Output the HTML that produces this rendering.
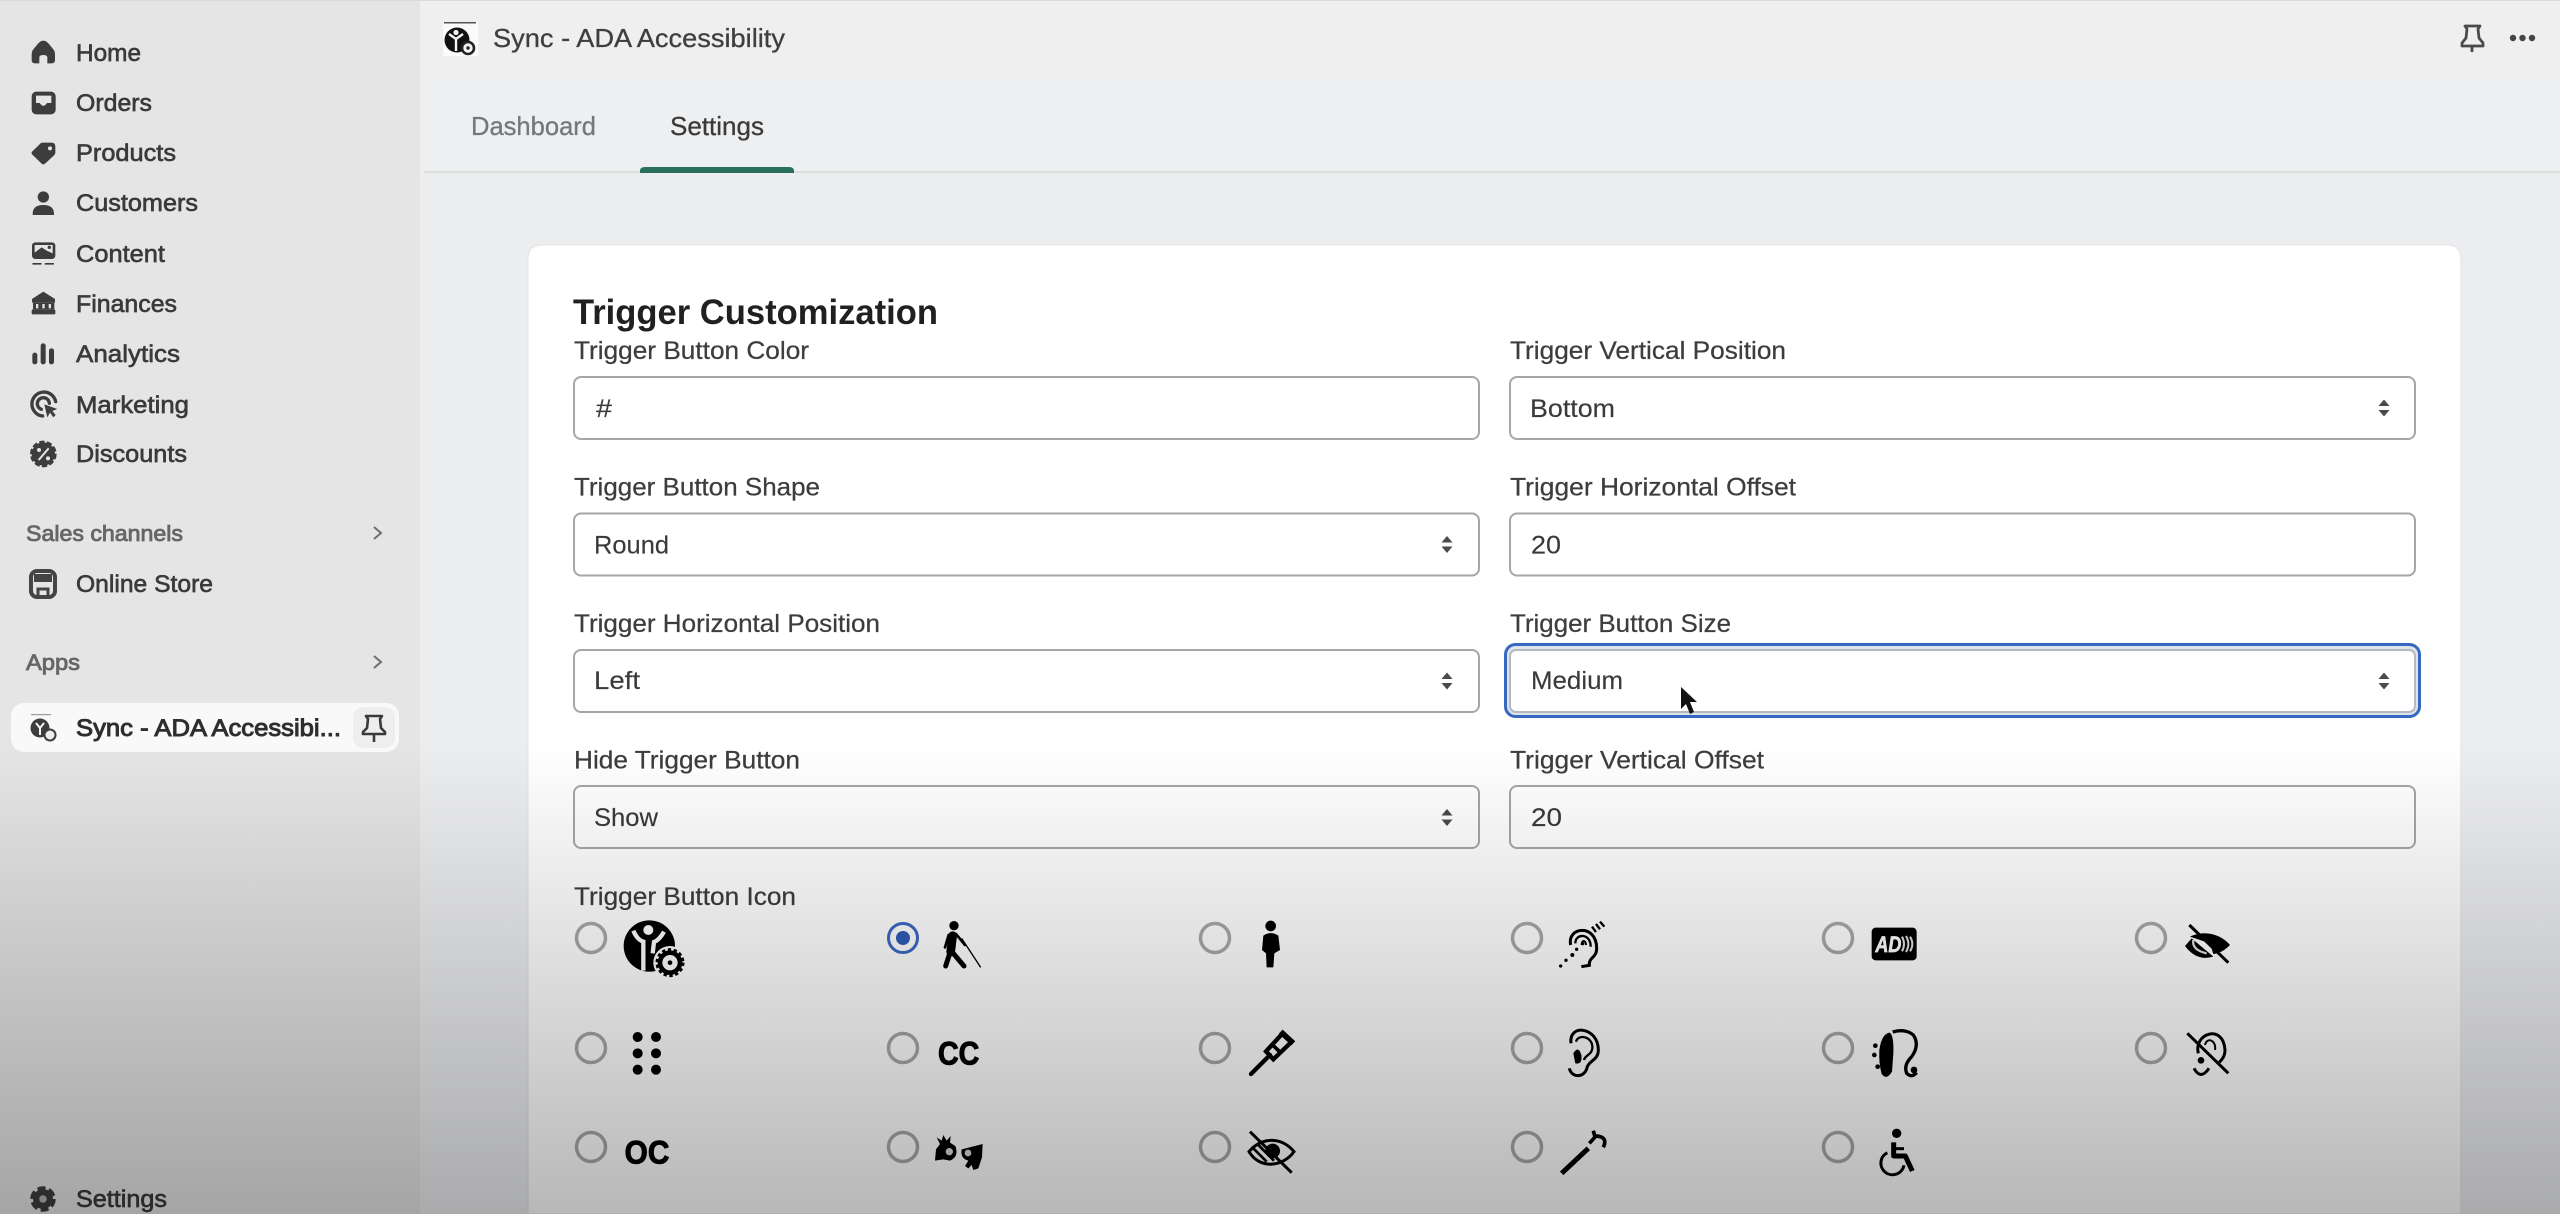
<!DOCTYPE html>
<html lang="en">
<head>
<meta charset="utf-8">
<title>Sync - ADA Accessibility</title>
<style>
html,body{margin:0;padding:0;background:#ebecee;width:2560px;height:1214px;overflow:hidden}
svg{display:block}
text{font-family:"Liberation Sans",sans-serif}
.n{font-size:24.500px;fill:#3a3a3a;stroke:#3a3a3a;stroke-width:.65}
.g{font-size:22.500px;fill:#666;stroke:#666;stroke-width:.85}
.l{font-size:25px;fill:#3d3d3d;stroke:#3d3d3d;stroke-width:.25}
.v{font-size:25px;fill:#3a3a3a;stroke:#3a3a3a;stroke-width:.15}
.i{fill:#fff;stroke:#a6a6a6;stroke-width:2}
.r{fill:none;stroke:#a8a8a8;stroke-width:3.500}
.ar{fill:#4a4a4a}
</style>
</head>
<body>
<svg width="2560" height="1214" viewBox="0 0 2560 1214" xmlns="http://www.w3.org/2000/svg">
<defs>
<linearGradient id="ov" gradientUnits="userSpaceOnUse" x1="0" y1="745" x2="0" y2="1214">
<stop offset="0" stop-color="#000" stop-opacity="0"/>
<stop offset="1" stop-color="#000" stop-opacity=".28"/>
</linearGradient>
</defs>

<!-- backgrounds -->
<rect width="2560" height="1214" fill="#ecedef"/>
<rect x="420" y="0" width="2140" height="80" fill="#efefef"/>
<rect x="420" y="80" width="2140" height="92" fill="#eeeff1"/>
<rect x="424" y="171" width="2136" height="2" fill="#dcdddd"/>
<rect x="0" y="0" width="420" height="1214" fill="#e5e5e5"/>
<rect x="0" y="0" width="2560" height="1" fill="#dadada"/>

<!-- sidebar text -->
<text class="n" x="76" y="61" textLength="65" lengthAdjust="spacingAndGlyphs">Home</text>
<text class="n" x="76" y="111" textLength="76" lengthAdjust="spacingAndGlyphs">Orders</text>
<text class="n" x="76" y="161" textLength="100" lengthAdjust="spacingAndGlyphs">Products</text>
<text class="n" x="76" y="211" textLength="122" lengthAdjust="spacingAndGlyphs">Customers</text>
<text class="n" x="76" y="262" textLength="89" lengthAdjust="spacingAndGlyphs">Content</text>
<text class="n" x="76" y="312" textLength="101" lengthAdjust="spacingAndGlyphs">Finances</text>
<text class="n" x="76" y="362" textLength="104" lengthAdjust="spacingAndGlyphs">Analytics</text>
<text class="n" x="76" y="413" textLength="113" lengthAdjust="spacingAndGlyphs">Marketing</text>
<text class="n" x="76" y="462" textLength="111" lengthAdjust="spacingAndGlyphs">Discounts</text>
<text class="g" x="26" y="541" textLength="157" lengthAdjust="spacingAndGlyphs">Sales channels</text>
<text class="n" x="76" y="592" textLength="137" lengthAdjust="spacingAndGlyphs">Online Store</text>
<text class="g" x="26" y="670" textLength="54" lengthAdjust="spacingAndGlyphs">Apps</text>

<!-- chevrons -->
<path d="M374 527l7 6-7 6M374 656l7 6-7 6" fill="none" stroke="#6e6e6e" stroke-width="2"/>

<!-- active app row -->
<rect x="11" y="703" width="388" height="49" rx="13" fill="#f9f9f9"/>
<rect x="353" y="707" width="42" height="41" rx="10" fill="#eeeeee"/>
<text class="n" x="76" y="736" textLength="265" lengthAdjust="spacingAndGlyphs" style="stroke-width:1;fill:#2e2e2e;stroke:#2e2e2e">Sync - ADA Accessibi...</text>
<path d="M366 716h16l-2 3 1 9 4 4v2h-22v-2l4-4 1-9zM374 734v8" fill="none" stroke="#3a3a3a" stroke-width="2.600" stroke-linejoin="round"/>

<!-- small app icon -->
<rect x="31" y="714" width="20" height="1.200" fill="#999"/>
<circle cx="40" cy="728" r="9.500" fill="#3d3d3d"/>
<path d="M36 723l4 5 4-5M40 728v7" stroke="#f5f5f5" stroke-width="2" fill="none"/>
<circle cx="50" cy="735" r="5.500" fill="#eee" stroke="#3d3d3d" stroke-width="2"/>

<!-- sidebar icons, drawn in 3x coords -->
<g transform="scale(.33333)" fill="#3d3d3d">
<path d="M130 122 Q138 122 146 131 L160 148 Q165 154 165 163 V180 Q165 190 155 190 H142 V172 Q142 165 130 165 Q118 165 118 172 V190 H105 Q95 190 95 180 V163 Q95 154 100 148 L114 131 Q122 122 130 122Z"/>
<rect x="95" y="275" width="72" height="68" rx="14"/>
<path d="M108 287 H154 V309 H141 Q130 326 119 309 H108Z" fill="#e5e5e5"/>
<path d="M128 428 H155 Q166 428 166 440 V458 Q166 463 160 468 L136 490 Q130 496 124 490 L97 464 Q92 459 97 454 L118 434 Q122 428 128 428Z"/>
<circle cx="150" cy="445" r="6" fill="#e5e5e5"/>
<circle cx="130" cy="591" r="17"/>
<path d="M98 645 Q96 615 130 615 Q164 615 162 645Z"/>
<rect x="96" y="727" width="70" height="50" rx="10"/>
<path d="M104 735 H158 V760 L140 752 L125 742 L104 758Z" fill="#e5e5e5"/>
<circle cx="148" cy="742" r="5"/>
<rect x="97" y="789" width="28" height="5" rx="2"/>
<rect x="134" y="789" width="28" height="5" rx="2"/>
<path d="M130 875 L165 897 V908 H96 V897Z"/>
<rect x="95" y="928" width="71" height="15" rx="4"/>
<rect x="99" y="908" width="64" height="20"/>
<rect x="108" y="912" width="7" height="13" fill="#e5e5e5"/><rect x="127" y="912" width="7" height="13" fill="#e5e5e5"/><rect x="146" y="912" width="7" height="13" fill="#e5e5e5"/>
<rect x="97" y="1058" width="15" height="35" rx="7"/>
<rect x="122" y="1030" width="15" height="63" rx="7"/>
<rect x="147" y="1045" width="15" height="48" rx="7"/>
<path d="M167 1205 A36 36 0 1 0 128 1248" fill="none" stroke="#3d3d3d" stroke-width="10" stroke-linecap="round"/>
<path d="M148 1210 A18 18 0 1 0 124 1228" fill="none" stroke="#3d3d3d" stroke-width="10" stroke-linecap="round"/>
<path d="M133 1213 L172 1227 L157 1233 L167 1245 L160 1252 L150 1238 L142 1252Z"/>
<circle cx="130" cy="1362" r="35"/>
<circle cx="130" cy="1362" r="37" fill="none" stroke="#3d3d3d" stroke-width="6" stroke-dasharray="16 7"/>
<path d="M116 1380 L146 1345" stroke="#e5e5e5" stroke-width="6"/>
<circle cx="117" cy="1350" r="6" fill="#e5e5e5"/>
<circle cx="144" cy="1375" r="6" fill="#e5e5e5"/>
</g>

<!-- online store icon -->
<rect x="31" y="571" width="24" height="26" rx="6" fill="none" stroke="#444" stroke-width="4"/>
<path d="M34 574h18v8h-18z" fill="#444"/>
<path d="M38 597v-8h10v8" fill="none" stroke="#444" stroke-width="3"/>
<!-- settings gear -->
<circle cx="43" cy="1199" r="10" fill="#3d3d3d"/>
<circle cx="43" cy="1199" r="11" fill="none" stroke="#3d3d3d" stroke-width="3.500" stroke-dasharray="8 3.500"/>
<circle cx="43" cy="1199" r="3.800" fill="#b3b3b3"/>
<text class="n" x="76" y="1207" textLength="91" lengthAdjust="spacingAndGlyphs">Settings</text>

<!-- top bar -->
<rect x="443" y="22" width="35" height="34" fill="#fbfbfb"/>
<rect x="444" y="22" width="32" height="1.500" fill="#555"/>
<circle cx="457" cy="40" r="12.500" fill="#111"/>
<path d="M449 34l7 5 7-5M456 39v12" stroke="#f4f4f4" stroke-width="2.400" fill="none"/>
<circle cx="456" cy="32.500" r="2.600" fill="#f4f4f4"/>
<circle cx="468" cy="48" r="6" fill="#f4f4f4" stroke="#222" stroke-width="2.600"/>
<circle cx="468" cy="48" r="1.700" fill="#222"/>
<text x="493" y="47" font-size="26" fill="#3f3f3f" stroke="#3f3f3f" stroke-width=".3" textLength="292" lengthAdjust="spacingAndGlyphs">Sync - ADA Accessibility</text>
<path d="M2465 26h15l-2 3 1 9 4 5v3h-21v-3l4-5 1-9zM2472 46v6" fill="none" stroke="#4a4a4a" stroke-width="2.800" stroke-linejoin="round"/>
<circle cx="2513" cy="38" r="3.200" fill="#444"/><circle cx="2522.500" cy="38" r="3.200" fill="#444"/><circle cx="2532" cy="38" r="3.200" fill="#444"/>

<!-- tabs -->
<text x="471" y="135" font-size="26" fill="#74787c" stroke="#74787c" stroke-width=".3" textLength="125" lengthAdjust="spacingAndGlyphs">Dashboard</text>
<text x="670" y="135" font-size="26" fill="#3a3a3a" stroke="#3a3a3a" stroke-width=".3" textLength="94" lengthAdjust="spacingAndGlyphs">Settings</text>
<path d="M640 173 V171 Q640 167 645 167 H789 Q794 167 794 171 V173Z" fill="#2a6f59"/>

<!-- card -->
<path d="M542 245 H2447 Q2461 245 2461 259 V1214 H528 V259 Q528 245 542 245Z" fill="#fff" stroke="#e2e3e5" stroke-width="1"/>
<text x="573" y="324" font-size="35" font-weight="700" fill="#202020" textLength="365" lengthAdjust="spacingAndGlyphs">Trigger Customization</text>

<!-- labels -->
<text class="l" x="574" y="359" textLength="235" lengthAdjust="spacingAndGlyphs">Trigger Button Color</text>
<text class="l" x="1510" y="359" textLength="276" lengthAdjust="spacingAndGlyphs">Trigger Vertical Position</text>
<text class="l" x="574" y="495.500" textLength="246" lengthAdjust="spacingAndGlyphs">Trigger Button Shape</text>
<text class="l" x="1510" y="495.500" textLength="286" lengthAdjust="spacingAndGlyphs">Trigger Horizontal Offset</text>
<text class="l" x="574" y="632" textLength="306" lengthAdjust="spacingAndGlyphs">Trigger Horizontal Position</text>
<text class="l" x="1510" y="632" textLength="221" lengthAdjust="spacingAndGlyphs">Trigger Button Size</text>
<text class="l" x="574" y="768.500" textLength="226" lengthAdjust="spacingAndGlyphs">Hide Trigger Button</text>
<text class="l" x="1510" y="768.500" textLength="254" lengthAdjust="spacingAndGlyphs">Trigger Vertical Offset</text>
<text class="l" x="574" y="905" textLength="222" lengthAdjust="spacingAndGlyphs">Trigger Button Icon</text>

<!-- inputs -->
<rect class="i" x="574" y="377" width="905" height="62" rx="7"/>
<rect class="i" x="1510" y="377" width="905" height="62" rx="7"/>
<rect class="i" x="574" y="513.500" width="905" height="62" rx="7"/>
<rect class="i" x="1510" y="513.500" width="905" height="62" rx="7"/>
<rect class="i" x="574" y="650" width="905" height="62" rx="7"/>
<rect x="1505.500" y="644.500" width="914" height="72" rx="10" fill="#dfe3ec" stroke="#3568c0" stroke-width="3"/>
<rect x="1510" y="650" width="905" height="62" rx="6" fill="#fff" stroke="#b4b8bf" stroke-width="2"/>
<rect class="i" x="574" y="786" width="905" height="62" rx="7"/>
<rect class="i" x="1510" y="786" width="905" height="62" rx="7"/>

<text class="v" x="596" y="417" textLength="16" lengthAdjust="spacingAndGlyphs">#</text>
<text class="v" x="1530" y="417" textLength="85" lengthAdjust="spacingAndGlyphs">Bottom</text>
<text class="v" x="594" y="553.500" textLength="75" lengthAdjust="spacingAndGlyphs">Round</text>
<text class="v" x="1531" y="553.500" textLength="30" lengthAdjust="spacingAndGlyphs">20</text>
<text class="v" x="594" y="689" textLength="46" lengthAdjust="spacingAndGlyphs">Left</text>
<text class="v" x="1531" y="689" textLength="92" lengthAdjust="spacingAndGlyphs">Medium</text>
<text class="v" x="594" y="826" textLength="64" lengthAdjust="spacingAndGlyphs">Show</text>
<text class="v" x="1531" y="826" textLength="31" lengthAdjust="spacingAndGlyphs">20</text>

<!-- select arrows -->
<g class="ar">
<path d="M2384 399.500l5.500 6.500h-11zM2384 416.500l5.500-6.500h-11z"/>
<path d="M1447 536l5.500 6.500h-11zM1447 553l5.500-6.500h-11z"/>
<path d="M1447 672.500l5.500 6.500h-11zM1447 689.500l5.500-6.500h-11z"/>
<path d="M2384 672.500l5.500 6.500h-11zM2384 689.500l5.500-6.500h-11z"/>
<path d="M1447 809l5.500 6.500h-11zM1447 826l5.500-6.500h-11z"/>
</g>

<!-- cursor -->
<path d="M1681 687 V709 L1686 704 L1690 714 L1694 712 L1690 702 L1697 702Z" fill="#111"/>

<!-- radios -->
<circle class="r" cx="591" cy="938" r="14.500"/>
<circle cx="903" cy="938" r="14.500" fill="#fff" stroke="#3a69c2" stroke-width="3"/>
<circle cx="903" cy="938" r="7" fill="#2f5cb5"/>
<circle class="r" cx="1215" cy="938" r="14.500"/>
<circle class="r" cx="1527" cy="938" r="14.500"/>
<circle class="r" cx="1838" cy="938" r="14.500"/>
<circle class="r" cx="2151" cy="938" r="14.500"/>
<circle class="r" cx="591" cy="1048" r="14.500"/>
<circle class="r" cx="903" cy="1048" r="14.500"/>
<circle class="r" cx="1215" cy="1048" r="14.500"/>
<circle class="r" cx="1527" cy="1048" r="14.500"/>
<circle class="r" cx="1838" cy="1048" r="14.500"/>
<circle class="r" cx="2151" cy="1048" r="14.500"/>
<circle class="r" cx="591" cy="1147" r="14.500"/>
<circle class="r" cx="903" cy="1147" r="14.500"/>
<circle class="r" cx="1215" cy="1147" r="14.500"/>
<circle class="r" cx="1527" cy="1147" r="14.500"/>
<circle class="r" cx="1838" cy="1147" r="14.500"/>

<!-- icons columns 1-2 -->
<g transform="translate(560 890) scale(.33333)" fill="#000">
<circle cx="268" cy="168" r="77"/>
<circle cx="265" cy="120" r="15" fill="#fff"/>
<path d="M220 122 Q232 150 250 155 L250 242 M312 125 Q298 150 282 156 L278 190" fill="none" stroke="#fff" stroke-width="13"/>
<circle cx="330" cy="218" r="50" fill="#fff"/>
<circle cx="330" cy="218" r="30" fill="none" stroke="#000" stroke-width="14"/>
<circle cx="330" cy="218" r="39" fill="none" stroke="#000" stroke-width="9" stroke-dasharray="10 7.600"/>
<circle cx="330" cy="218" r="7"/>

<circle cx="1182" cy="107" r="14"/>
<path d="M1178 137 L1172 186" fill="none" stroke="#000" stroke-width="26" stroke-linecap="round"/>
<path d="M1170 188 L1157 228 M1178 188 L1212 228" fill="none" stroke="#000" stroke-width="15" stroke-linecap="round"/>
<path d="M1166 135 L1155 172 M1188 132 L1215 165" fill="none" stroke="#000" stroke-width="8" stroke-linecap="round"/>
<path d="M1205 145 L1262 232" stroke="#000" stroke-width="4"/>

<circle cx="233" cy="441" r="15"/><circle cx="288" cy="441" r="15"/>
<circle cx="233" cy="490" r="15"/><circle cx="288" cy="490" r="15"/>
<circle cx="233" cy="539" r="15"/><circle cx="288" cy="539" r="15"/>

<text x="1134" y="524" font-size="96" font-weight="700" stroke="#000" stroke-width="3" textLength="124" lengthAdjust="spacingAndGlyphs">CC</text>
<text x="194" y="821" font-size="96" font-weight="700" stroke="#000" stroke-width="3" textLength="134" lengthAdjust="spacingAndGlyphs">OC</text>

<path d="M1125 812 L1128 778 L1140 762 L1130 742 L1145 752 L1150 735 L1160 752 L1172 738 L1170 758 L1186 768 Q1198 800 1170 812 L1150 808Z"/>
<circle cx="1168" cy="785" r="11" fill="#d9d9d9"/>
<path d="M1205 778 L1268 762 L1266 802 L1255 835 L1240 840 L1235 825 L1225 835 L1215 828 L1225 812 Q1200 805 1205 778Z"/>
<circle cx="1224" cy="789" r="10" fill="#d9d9d9"/>
</g>

<!-- icons columns 3-4 -->
<g transform="translate(1180 890) scale(.33333)" fill="#000">
<circle cx="272" cy="108" r="16"/>
<path d="M250 137 Q272 122 295 137 L300 180 L283 190 L280 232 L260 232 L258 190 L246 180Z"/>

<path d="M1172 165 C1160 110 1250 100 1250 175 C1250 205 1226 200 1228 226 L1204 230" fill="none" stroke="#000" stroke-width="9"/>
<path d="M1186 160 C1186 128 1233 130 1232 170" fill="none" stroke="#000" stroke-width="7"/>
<path d="M1205 165 C1205 148 1218 150 1218 165" fill="none" stroke="#000" stroke-width="6"/>
<path d="M1236 110 L1248 126 M1248 102 L1260 118 M1260 95 L1273 110" stroke="#000" stroke-width="7"/>
<circle cx="1142" cy="228" r="5"/><circle cx="1158" cy="211" r="5"/><circle cx="1177" cy="195" r="6"/><circle cx="1190" cy="178" r="5"/><circle cx="1208" cy="161" r="5"/>

<path d="M213 552 L270 495" stroke="#000" stroke-width="13" stroke-linecap="round"/>
<path d="M302 425 L340 460" stroke="#000" stroke-width="17"/>
<path d="M308 430 L258 484 L280 508 L332 458" fill="none" stroke="#000" stroke-width="13"/>
<path d="M278 465 L302 488" stroke="#000" stroke-width="11"/>

<path d="M1173 460 C1165 400 1255 410 1255 480 C1255 510 1230 510 1222 530 C1215 565 1175 565 1168 535" fill="none" stroke="#000" stroke-width="9"/>
<path d="M1188 455 C1195 430 1240 440 1237 475 C1235 495 1215 495 1212 510" fill="none" stroke="#000" stroke-width="7"/>
<path d="M1180 490 Q1195 465 1204 495 Q1208 525 1186 520Z"/>

<path d="M207 785 C250 735 310 745 342 785 C310 830 240 840 207 785Z" fill="none" stroke="#000" stroke-width="9"/>
<circle cx="278" cy="783" r="22"/>
<path d="M210 725 L335 848" stroke="#000" stroke-width="9"/>
<path d="M215 770 L260 815 M232 762 L282 812" stroke="#000" stroke-width="8"/>

<path d="M1145 850 L1225 775" stroke="#000" stroke-width="15"/>
<path d="M1228 760 L1248 738 Q1285 740 1270 772" fill="none" stroke="#000" stroke-width="11"/>
<path d="M1240 722 L1246 745" stroke="#000" stroke-width="11"/>
</g>

<!-- icons columns 5-6 -->
<g transform="translate(1780 890) scale(.33333)" fill="#000">
<rect x="275" y="113" width="135" height="98" rx="12"/>
<text x="286" y="186" font-size="66" font-weight="700" font-style="italic" fill="#fff" stroke="#fff" stroke-width="2" textLength="78" lengthAdjust="spacingAndGlyphs">AD</text>
<path d="M366 140 Q378 162 366 184 M378 138 Q392 162 378 186 M390 140 Q404 162 390 184" fill="none" stroke="#e2e2e2" stroke-width="6"/>

<path d="M1230 140 C1270 120 1320 130 1350 165 C1335 180 1320 190 1300 192 L1290 160Z"/>
<path d="M1215 168 L1235 145 L1300 200 Q1250 215 1215 168Z"/>
<path d="M1240 150 Q1235 180 1280 190" fill="none" stroke="#ddd" stroke-width="7"/>
<path d="M1228 105 L1345 218" stroke="#000" stroke-width="9"/>

<path d="M298 480 Q305 430 330 428 Q342 440 340 490 L336 545 Q320 572 305 552 Q296 520 298 480Z"/>
<path d="M338 426 Q375 415 400 435 Q420 465 395 500 Q370 525 380 550 Q395 565 410 548" fill="none" stroke="#000" stroke-width="10"/>
<circle cx="402" cy="540" r="10"/>
<circle cx="286" cy="467" r="7"/><circle cx="283" cy="495" r="7"/><circle cx="293" cy="530" r="7"/>

<path d="M1255 490 C1240 430 1330 400 1335 480 C1335 500 1325 510 1315 520" fill="none" stroke="#000" stroke-width="9"/>
<path d="M1275 465 C1280 440 1310 450 1305 480" fill="none" stroke="#000" stroke-width="6"/>
<path d="M1222 430 L1345 550" stroke="#000" stroke-width="9"/>
<path d="M1242 535 Q1262 572 1287 535" fill="none" stroke="#000" stroke-width="9"/>
<circle cx="1263" cy="511" r="10"/>

<circle cx="350" cy="730" r="14"/>
<path d="M341 757 L341 798 L376 798 L397 843" fill="none" stroke="#000" stroke-width="15" stroke-linejoin="round"/>
<path d="M340 776 L372 776" stroke="#000" stroke-width="9"/>
<path d="M322 788 A35 35 0 1 0 372 826" fill="none" stroke="#000" stroke-width="9"/>
</g>

<!-- bottom darkening overlay -->
<rect x="0" y="745" width="2560" height="469" fill="url(#ov)"/>
</svg>
</body>
</html>
